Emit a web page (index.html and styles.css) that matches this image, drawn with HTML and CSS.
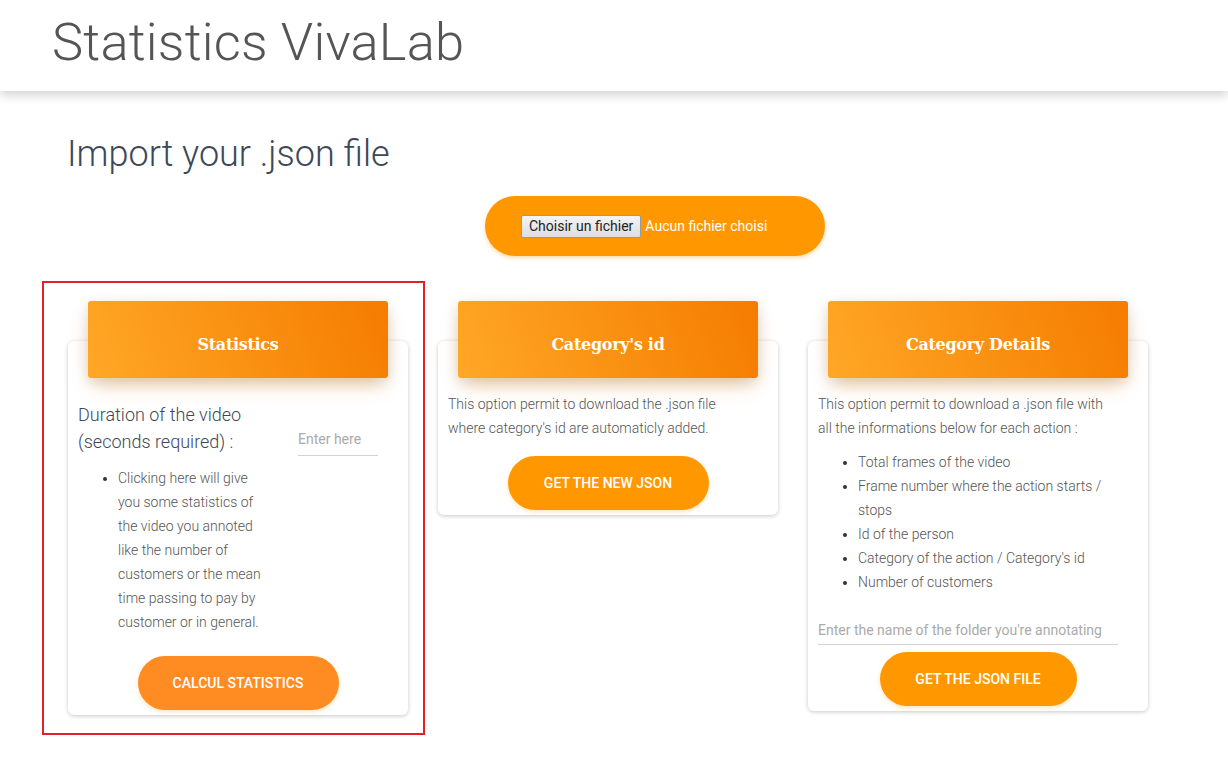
FILE: index.html
```html
<!DOCTYPE html>
<html lang="en">
<head>
<meta charset="utf-8">
<title>Statistics VivaLab</title>
<link rel="stylesheet" href="styles.css">
</head>
<body>
<header class="topbar">
  <h1 class="brand">Statistics VivaLab</h1>
</header>
<main class="content">
  <h2 class="page-title">Import your .json file</h2>
  <div class="upload-row">
    <div class="upload-pill">
      <span class="file-btn">Choisir un fichier</span>
      <span class="file-name">Aucun fichier choisi</span>
    </div>
  </div>
  <div class="cards">
    <div class="highlight">
      <div class="card">
        <div class="card-header"><h3 class="card-title">Statistics</h3></div>
        <div class="card-body">
          <div class="stats-grid">
            <div class="stats-text">
              <p class="duration">Duration of the video (seconds required) :</p>
              <ul class="list list-narrow">
                <li>Clicking here will give you some statistics of the video you annoted like the number of customers or the mean time passing to pay by customer or in general.</li>
              </ul>
            </div>
            <div class="stats-input">
              <div class="field field-small">Enter here</div>
            </div>
          </div>
          <div class="btn-row btn-row-1"><span class="btn btn-alt">Calcul statistics</span></div>
        </div>
      </div>
    </div>
    <div class="card card-2">
      <div class="card-header"><h3 class="card-title">Category's id</h3></div>
      <div class="card-body">
        <p class="desc">This option permit to download the .json file where category's id are automaticly added.</p>
        <div class="btn-row btn-row-2"><span class="btn">Get the new json</span></div>
      </div>
    </div>
    <div class="card card-3">
      <div class="card-header"><h3 class="card-title">Category Details</h3></div>
      <div class="card-body">
        <p class="desc">This option permit to download a .json file with all the informations below for each action :</p>
        <ul class="list list-wide">
          <li>Total frames of the video</li>
          <li>Frame number where the action starts / stops</li>
          <li>Id of the person</li>
          <li>Category of the action / Category's id</li>
          <li>Number of customers</li>
        </ul>
        <div class="field field-wide">Enter the name of the folder you're annotating</div>
        <div class="btn-row btn-row-3"><span class="btn btn-narrow">Get the json file</span></div>
      </div>
    </div>
  </div>
</main>
</body>
</html>
```
FILE: styles.css
```css
* { box-sizing: border-box; }
html, body { margin: 0; padding: 0; background: #fff; }
body {
  font-family: Roboto, "Liberation Sans", Arial, sans-serif;
  color: #3c4858;
  width: 1228px;
  height: 775px;
  overflow: hidden;
}
.topbar {
  height: 91px;
  background: #fff;
  box-shadow: 0 4px 10px rgba(0,0,0,0.18);
  padding-left: 52px;
  position: relative;
  z-index: 2;
}
.brand {
  margin: 0;
  font-weight: 300;
  font-size: 52.5px;
  line-height: 84px;
  color: #555;
  letter-spacing: 0.2px;
}
.content { padding-top: 40px; }
.page-title {
  margin: 0 0 0 67px;
  font-weight: 300;
  font-size: 36px;
  line-height: 46px;
  color: #3c4858;
}
.upload-row {
  display: flex;
  padding-left: 485px;
  margin-top: 19px;
}
.upload-pill {
  width: 340px;
  height: 60px;
  border-radius: 30px;
  background: #ff9800;
  box-shadow: 0 2px 4px rgba(255,152,0,0.35);
  display: flex;
  align-items: center;
  padding-left: 36px;
  gap: 4px;
}
.file-btn {
  display: inline-block;
  height: 23px;
  padding: 0 7px;
  line-height: 21px;
  font-size: 14px;
  color: #222;
  border: 1px solid #9a9a9a;
  border-radius: 2px;
  background: linear-gradient(#f4f4f4, #dedede);
}
.file-name { color: #fff; font-size: 14px; }
.cards {
  display: flex;
  align-items: flex-start;
  margin-top: 25px;
  padding-left: 42px;
}
.highlight {
  width: 383px;
  border: 2px solid #e3202a;
  padding: 18px 15px 18px 24px;
}
.card {
  display: flow-root;
  width: 340px;
  margin-top: 40px;
  background: #fff;
  border-radius: 6px;
  box-shadow: 0 1px 4px rgba(0,0,0,0.22);
}
.card-2 { margin-left: 13px; margin-top: 60px; }
.card-3 { margin-left: 30px; margin-top: 60px; }
.card-header {
  margin: -40px 20px 0;
  height: 77px;
  border-radius: 3px;
  background: linear-gradient(70deg, #ffa726, #f57c00);
  box-shadow: 0 10px 20px -6px rgba(230,130,20,0.45), 0 4px 14px rgba(0,0,0,0.12);
  display: flex;
  align-items: center;
  justify-content: center;
  padding-top: 10px;
}
.card-title {
  margin: 0;
  color: #fff;
  font-family: "DejaVu Serif", "Liberation Serif", serif;
  font-weight: bold;
  font-size: 16px;
  letter-spacing: -0.3px;
}
.card-body { padding: 14px 10px 5px; }
.stats-grid {
  display: grid;
  grid-template-columns: 190px 80px;
  column-gap: 30px;
  margin-top: 9px;
}
.duration {
  margin: 0;
  font-size: 18px;
  font-weight: 300;
  line-height: 27px;
  color: #3c4858;
}
.stats-input { padding-top: 22px; }
.field {
  color: #aaa;
  font-size: 14px;
  font-weight: 400;
  border-bottom: 1px solid #d2d2d2;
}
.field-small { height: 33px; line-height: 32px; }
.field-wide { width: 300px; margin-top: 23px; height: 28px; line-height: 26px; }
.list {
  margin: 10px 0 0;
  padding-left: 40px;
  font-size: 14px;
  font-weight: 300;
  line-height: 24px;
  color: #555;
}
.list-narrow { margin-top: 11px; }
.list li::marker { color: #333; }
.desc {
  margin: 0;
  font-size: 14px;
  font-weight: 300;
  line-height: 24px;
  color: #555;
  width: 300px;
}
.list-wide { margin-top: 10px; padding-left: 40px; }
.btn-row { display: flex; justify-content: center; }
.btn-row-1 { margin-top: 22px; }
.btn-row-2 { margin-top: 16px; }
.btn-row-3 { margin-top: 7px; }
.btn {
  display: inline-flex;
  align-items: center;
  justify-content: center;
  width: 201px;
  height: 54px;
  border-radius: 27px;
  background: #ff9800;
  color: #fff;
  font-size: 14px;
  font-weight: 500;
  text-transform: uppercase;
  box-shadow: 0 2px 4px rgba(255,152,0,0.25);
}
.btn-alt { background: #fe8c23; }
.btn-narrow { width: 197px; }
```
